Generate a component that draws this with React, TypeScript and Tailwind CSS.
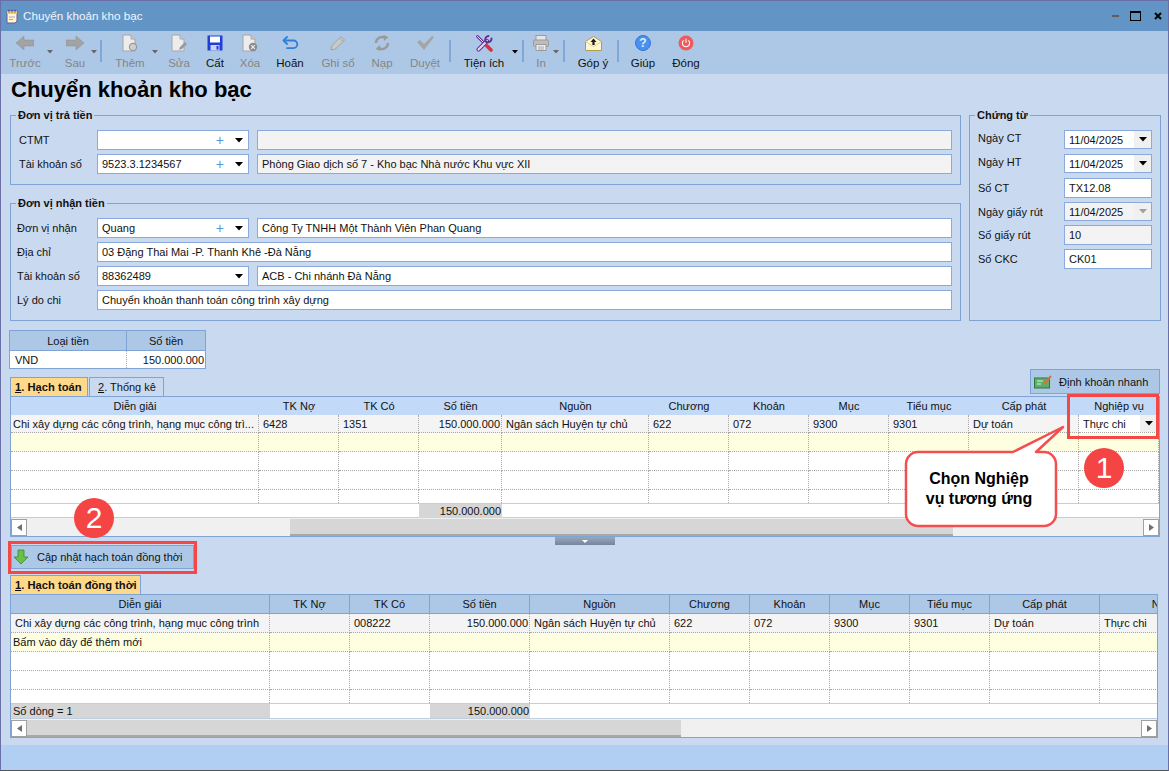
import type { ReactNode } from 'react';

const upperCols = 'grid grid-cols-[248px_80px_80px_83px_147px_80px_80px_80px_80px_110px_80px]';
const lowerCols = 'grid grid-cols-[259px_80px_80px_100px_140px_80px_80px_80px_80px_110px_154px]';

const upperHead = ['Diễn giải', 'TK Nợ', 'TK Có', 'Số tiền', 'Nguồn', 'Chương', 'Khoản', 'Mục', 'Tiểu mục', 'Cấp phát', 'Nghiệp vụ'];

function Caret({ color = '#000' }: { color?: string }) {
  return (
    <svg width="8" height="5" viewBox="0 0 8 5" className="shrink-0">
      <polygon points="0,0 8,0 4,4.5" fill={color} />
    </svg>
  );
}

function IconBack({ flip }: { flip?: boolean }) {
  return (
    <svg width="18" height="16" viewBox="0 0 18 16" className={flip ? '-scale-x-100' : ''}>
      <polygon points="0,8 8,1 8,5 18,5 18,11 8,11 8,15" fill="#a3a3a3" stroke="#8f8f8f" strokeWidth="0.5" />
    </svg>
  );
}

function IconDoc({ badge }: { badge: 'add' | 'edit' | 'del' }) {
  return (
    <svg width="16" height="18" viewBox="0 0 16 18">
      <path d="M1 1h8l4 4v12H1z" fill="#ececec" stroke="#a6a6a6" />
      <path d="M9 1v4h4" fill="#d0d0d0" stroke="#a6a6a6" />
      {badge === 'add' && <circle cx="11" cy="13" r="3.6" fill="#cfcfcf" stroke="#9a9a9a" strokeWidth="1.2" />}
      {badge === 'edit' && <path d="M8 16l1-3 5-5 2 2-5 5z" fill="#9a9a9a" />}
      {badge === 'del' && (
        <>
          <circle cx="11" cy="13" r="4.2" fill="#8c8c8c" />
          <path d="M9.2 11.2l3.6 3.6M12.8 11.2l-3.6 3.6" stroke="#eee" strokeWidth="1.1" />
        </>
      )}
    </svg>
  );
}

function IconSave() {
  return (
    <svg width="16" height="16" viewBox="0 0 16 16">
      <path d="M0.5 0.5h15v15h-15z" fill="#1f3fd8" />
      <rect x="3" y="1.5" width="10" height="6" fill="#fff" />
      <rect x="3.5" y="10" width="9" height="5.5" fill="#c9d3ee" />
      <rect x="9.5" y="11" width="2" height="3.5" fill="#1f3fd8" />
    </svg>
  );
}

function IconUndo() {
  return (
    <svg width="17" height="14" viewBox="0 0 17 14" fill="none" stroke="#2f7fd8" strokeWidth="1.8" strokeLinecap="round" strokeLinejoin="round">
      <path d="M5 1L1.5 4.5 5 8" />
      <path d="M2 4.5h9.5a3.8 3.8 0 0 1 0 7.6H5" />
    </svg>
  );
}

function IconPencil() {
  return (
    <svg width="16" height="16" viewBox="0 0 16 16">
      <path d="M1 15l1-4.5L11 1.5l3.5 3.5-9 9z" fill="#c9c9c9" stroke="#a2a2a2" />
      <path d="M9.5 3l3.5 3.5" stroke="#a2a2a2" />
    </svg>
  );
}

function IconReload() {
  return (
    <svg width="16" height="16" viewBox="0 0 16 16" fill="none" stroke="#9a9a9a" strokeWidth="2.4">
      <path d="M2 8a6 6 0 0 1 9-5.2" />
      <path d="M14 8a6 6 0 0 1-9 5.2" />
      <polygon points="9.5,0 14.5,2 10,6" fill="#9a9a9a" stroke="none" />
      <polygon points="6.5,16 1.5,14 6,10" fill="#9a9a9a" stroke="none" />
    </svg>
  );
}

function IconCheck() {
  return (
    <svg width="17" height="14" viewBox="0 0 17 14">
      <polygon points="0,6 3,4 7,8 15,0 17,1 7,14" fill="#a5a5a5" />
    </svg>
  );
}

function IconTools() {
  return (
    <svg width="17" height="17" viewBox="0 0 17 17" fill="none" strokeLinecap="round">
      <path d="M1.5 1.5l8 8" stroke="#5f2f94" strokeWidth="2.6" />
      <path d="M1.5 1.5l8 8" stroke="#f0e8f8" strokeWidth="1" />
      <path d="M2.5 14.5L11 6" stroke="#5f2f94" strokeWidth="4" />
      <path d="M2.5 14.5L11 6" stroke="#e6d8f4" strokeWidth="2.2" />
      <path d="M15.5 3.4a3.6 3.6 0 0 1-5.4 3.4M12.4 1a3.6 3.6 0 0 0-3 4.4" stroke="#5f2f94" strokeWidth="2" />
      <path d="M11 11l4 4" stroke="#d6333a" strokeWidth="3.6" />
    </svg>
  );
}

function IconPrint() {
  return (
    <svg width="16" height="16" viewBox="0 0 16 16">
      <rect x="3" y="0.5" width="10" height="5" fill="#e6e6e6" stroke="#9b9b9b" />
      <rect x="0.5" y="5" width="15" height="6.5" rx="1" fill="#bdbdbd" stroke="#9b9b9b" />
      <rect x="3" y="9.5" width="10" height="6" fill="#ededed" stroke="#9b9b9b" />
      <path d="M5 12h6M5 14h6" stroke="#a8a8a8" />
    </svg>
  );
}

function IconMail() {
  return (
    <svg width="17" height="15" viewBox="0 0 17 15">
      <path d="M0.5 5.5L8.5 0.5l8 5v9h-16z" fill="#fff6d2" stroke="#b79a45" />
      <path d="M0.5 5.5l8 5 8-5" fill="none" stroke="#e2cf8d" />
      <polygon points="8.5,2.5 11.5,6 9.6,6 9.6,9 7.4,9 7.4,6 5.5,6" fill="#1c1c1c" />
    </svg>
  );
}

function IconHelp() {
  return (
    <div className="flex h-4 w-4 items-center justify-center rounded-full border border-[#2f78d8] bg-[#4a90ee] text-[12px] font-bold leading-none text-[#dfeeff]">
      ?
    </div>
  );
}

function IconPower() {
  return (
    <svg width="16" height="16" viewBox="0 0 16 16">
      <circle cx="8" cy="8" r="7.5" fill="#ee5a5e" />
      <path d="M5.6 5.4a3.6 3.6 0 1 0 4.8 0" fill="none" stroke="#fff" strokeWidth="1.1" />
      <path d="M8 3.8v4" stroke="#fff" strokeWidth="1.1" />
    </svg>
  );
}

function ToolItem({ label, icon, off, className }: { label: string; icon: ReactNode; off?: boolean; className: string }) {
  return (
    <div className={`flex shrink-0 flex-col items-center whitespace-nowrap ${className}`}>
      <div className="flex h-[18px] items-center">{icon}</div>
      <div className={`mt-[4px] text-[11.5px] leading-[14px] ${off ? 'text-[#858585]' : 'text-[#111]'}`}>{label}</div>
    </div>
  );
}

function ToolCaret({ className, off }: { className: string; off?: boolean }) {
  return (
    <div className={`mt-[15px] flex h-[6px] w-[6px] shrink-0 items-center justify-center ${className}`}>
      <svg width="6" height="4" viewBox="0 0 6 4">
        <polygon points="0,0 6,0 3,3.5" fill={off ? '#666' : '#000'} />
      </svg>
    </div>
  );
}

function ToolSep({ className }: { className: string }) {
  return <div className={`mt-[6px] h-[22px] w-[2px] shrink-0 bg-[#7fa8d8] ${className}`} />;
}

function Toolbar() {
  return (
    <div className="flex h-[43px] items-start bg-[#adc8e6] pt-[3px]">
      <ToolItem className="ml-[9px] w-[30px]" label="Trước" off icon={<IconBack />} />
      <ToolCaret className="ml-[7px]" off />
      <ToolItem className="ml-[7px] w-[30px]" label="Sau" off icon={<IconBack flip />} />
      <ToolCaret className="ml-[1px]" off />
      <ToolSep className="ml-[3px]" />
      <ToolItem className="ml-[13px] w-[30px]" label="Thêm" off icon={<IconDoc badge="add" />} />
      <ToolCaret className="ml-[7px]" off />
      <ToolItem className="ml-[11px] w-[20px]" label="Sửa" off icon={<IconDoc badge="edit" />} />
      <ToolItem className="ml-[16px] w-[20px]" label="Cất" icon={<IconSave />} />
      <ToolItem className="ml-[15px] w-[20px]" label="Xóa" off icon={<IconDoc badge="del" />} />
      <ToolItem className="ml-[15px] w-[30px]" label="Hoãn" icon={<IconUndo />} />
      <ToolItem className="ml-[15px] w-[36px]" label="Ghi sổ" off icon={<IconPencil />} />
      <ToolItem className="ml-[14px] w-[24px]" label="Nạp" off icon={<IconReload />} />
      <ToolItem className="ml-[14px] w-[34px]" label="Duyệt" off icon={<IconCheck />} />
      <ToolSep className="ml-[7px]" />
      <ToolItem className="ml-[12px] w-[42px]" label="Tiện ích" icon={<IconTools />} />
      <ToolCaret className="ml-[7px]" />
      <ToolSep className="ml-[4px]" />
      <ToolItem className="ml-[7px] w-[20px]" label="In" off icon={<IconPrint />} />
      <ToolCaret className="ml-[2px]" off />
      <ToolSep className="ml-[4px]" />
      <ToolItem className="ml-[11px] w-[34px]" label="Góp ý" icon={<IconMail />} />
      <ToolSep className="ml-[7px]" />
      <ToolItem className="ml-[10px] w-[28px]" label="Giúp" icon={<IconHelp />} />
      <ToolItem className="ml-[13px] w-[32px]" label="Đóng" icon={<IconPower />} />
    </div>
  );
}

function TitleBar() {
  return (
    <div className="flex h-[30px] items-center bg-[#6295c6] pl-[4px] text-white">
      <svg width="14" height="15" viewBox="0 0 14 15">
        <path d="M2 2h10v10l-2 2H2z" fill="#fdf6cf" stroke="#6a55a8" />
        <rect x="2" y="2" width="10" height="3" fill="#f1cf55" />
        <path d="M4 0.5v3M7 0.5v3M10 0.5v3" stroke="#5a4a9c" />
        <path d="M4 8h6M4 10.5h4" stroke="#a9a0d2" />
      </svg>
      <span className="ml-[4px] text-[11.7px] text-[#eef5fc]">Chuyển khoản kho bạc</span>
      <div className="ml-auto flex items-center pr-[6px]">
        <div className="h-[2px] w-[7px] bg-[#5c5c5c]" />
        <div className="ml-[11px] h-[10px] w-[11px] border border-t-[2px] border-black" />
        <svg width="8" height="8" viewBox="0 0 8 8" className="ml-[13px]">
          <path d="M1 1l6 6M7 1L1 7" stroke="#000" strokeWidth="2" />
        </svg>
      </div>
    </div>
  );
}

function Box({ children, className = '', muted }: { children?: ReactNode; className?: string; muted?: boolean }) {
  return (
    <div className={`flex h-5 items-center border border-[#8aaade] px-[4px] whitespace-nowrap ${muted ? 'bg-[#f3f3f3]' : 'bg-white'} ${className}`}>
      {children}
    </div>
  );
}

function Combo({ value, plus = true }: { value: string; plus?: boolean }) {
  return (
    <Box className="w-[152px] shrink-0">
      <span>{value}</span>
      {plus && <span className="ml-auto text-[14px] leading-none text-[#4d9fe0]">+</span>}
      <span className={plus ? 'ml-[11px] mr-[1px]' : 'ml-auto mr-[1px]'}>
        <Caret />
      </span>
    </Box>
  );
}

function Group({ title, children, className = '' }: { title: string; children: ReactNode; className?: string }) {
  return (
    <fieldset className={`border border-[#7fa4d4] ${className}`}>
      <legend className="ml-[5px] px-[2px] leading-[14px] font-bold">{title}</legend>
      {children}
    </fieldset>
  );
}

function FormRow({ label, labelClass = 'pl-[8px]', children }: { label: string; labelClass?: string; children: ReactNode }) {
  return (
    <div className="flex items-center">
      <div className={`w-[86px] shrink-0 ${labelClass}`}>{label}</div>
      {children}
    </div>
  );
}

function DocRow({ label, children, labelClass = '', className = 'mt-[4px]' }: { label: string; children: ReactNode; labelClass?: string; className?: string }) {
  return (
    <div className={`flex items-center pl-[8px] ${className}`}>
      <div className={`w-[86px] shrink-0 ${labelClass}`}>{label}</div>
      {children}
    </div>
  );
}

function DateBox({ value, off }: { value: string; off?: boolean }) {
  return (
    <div className={`flex h-[19px] w-[88px] items-center border border-[#8aaade] pl-[4px] ${off ? 'bg-[#f3f3f3]' : 'bg-white'}`}>
      <span>{value}</span>
      <span className="ml-auto flex h-full w-[17px] items-center justify-center bg-[#f0f0f0]">
        <Caret color={off ? '#a0a0a0' : '#000'} />
      </span>
    </div>
  );
}

function Forms() {
  return (
    <div className="flex gap-[8px] pl-[9px]">
      <div className="w-[951px]">
        <Group title="Đơn vị trả tiền" className="h-[77px]">
          <div className="flex flex-col gap-[4px] pt-[8px]">
            <FormRow label="CTMT">
              <Combo value="" />
              <Box muted className="ml-[8px] w-[695px]" />
            </FormRow>
            <FormRow label="Tài khoản số">
              <Combo value="9523.3.1234567" />
              <Box muted className="ml-[8px] w-[695px]">Phòng Giao dịch số 7 - Kho bạc Nhà nước Khu vực XII</Box>
            </FormRow>
          </div>
        </Group>
        <Group title="Đơn vị nhận tiền" className="mt-[11px] h-[125px]">
          <div className="flex flex-col gap-[4px] pt-[8px]">
            <FormRow label="Đơn vị nhận" labelClass="pl-[6px]">
              <Combo value="Quang" />
              <Box className="ml-[8px] w-[695px]">Công Ty TNHH Một Thành Viên Phan Quang</Box>
            </FormRow>
            <FormRow label="Địa chỉ" labelClass="pl-[6px]">
              <Box className="w-[855px]">03 Đặng Thai Mai -P. Thanh Khê -Đà Nẵng</Box>
            </FormRow>
            <FormRow label="Tài khoản số" labelClass="pl-[6px]">
              <Combo value="88362489" plus={false} />
              <Box className="ml-[8px] w-[695px]">ACB - Chi nhánh Đà Nẵng</Box>
            </FormRow>
            <FormRow label="Lý do chi" labelClass="pl-[6px]">
              <Box className="w-[855px]">Chuyển khoản thanh toán công trình xây dựng</Box>
            </FormRow>
          </div>
        </Group>
      </div>
      <Group title="Chứng từ" className="h-[213px] w-[192px]">
        <div className="pt-[8px]">
          <DocRow label="Ngày CT" className="" labelClass="pb-[3px]"><DateBox value="11/04/2025" /></DocRow>
          <DocRow label="Ngày HT" className="mt-[5px]" labelClass="pb-[3px]"><DateBox value="11/04/2025" /></DocRow>
          <DocRow label="Số CT" className="mt-[5px]"><Box className="w-[88px]">TX12.08</Box></DocRow>
          <DocRow label="Ngày giấy rút"><DateBox value="11/04/2025" off /></DocRow>
          <DocRow label="Số giấy rút"><Box muted className="w-[88px]">10</Box></DocRow>
          <DocRow label="Số CKC"><Box className="w-[88px]">CK01</Box></DocRow>
        </div>
      </Group>
    </div>
  );
}

function CurrencyTable() {
  return (
    <div className="ml-[8px] mt-[9px] w-[197px] border border-[#7fa4d4]">
      <div className="grid h-[20px] grid-cols-[117px_78px] border-b border-[#7fa4d4] bg-[#adc8e6]">
        <div className="flex items-center justify-center border-r border-[#7fa4d4]">Loại tiền</div>
        <div className="flex items-center justify-center">Số tiền</div>
      </div>
      <div className="grid h-[17px] grid-cols-[117px_78px] bg-white">
        <div className="flex items-center border-r border-dotted border-[#a8a8a8] pl-[5px]">VND</div>
        <div className="flex items-center justify-end pr-[1px]">150.000.000</div>
      </div>
    </div>
  );
}

function Tab({ n, label, active, className = '' }: { n: string; label: string; active?: boolean; className?: string }) {
  return (
    <div className={`flex h-[19px] items-center whitespace-pre border-x border-t border-[#7fa4d4] ${active ? 'bg-[#ffd98a] text-[11.2px] font-bold' : ''} ${className}`}>
      <span className="underline">{n}</span>
      <span>. {label}</span>
    </div>
  );
}

function Cell({ children, right, gray, className = '' }: { children?: ReactNode; right?: boolean; gray?: boolean; className?: string }) {
  return (
    <div className={`flex items-center overflow-hidden whitespace-nowrap border-r border-b border-dotted border-[#a8a8a8] ${right ? 'justify-end pr-[1px]' : 'pl-[4px]'} ${gray ? 'bg-[#d6d6d6]' : ''} ${className}`}>
      {children}
    </div>
  );
}

function BlankRows({ cols, bg, h, n }: { cols: string; bg: string; h: string; n: number }) {
  return (
    <div className={`${cols} ${bg} ${h}`}>
      {Array.from({ length: n }, (_, i) => (
        <Cell key={i} />
      ))}
    </div>
  );
}

function ScrollArrow({ right }: { right?: boolean }) {
  return (
    <div className="flex h-[17px] w-[16px] shrink-0 items-center justify-center border border-[#a0a0a0] bg-white">
      <svg width="5" height="7" viewBox="0 0 5 7">
        <polygon points={right ? '0,0 5,3.5 0,7' : '5,0 0,3.5 5,7'} fill="#707070" />
      </svg>
    </div>
  );
}

function UpperGrid() {
  return (
    <div className="ml-[9px] h-[141px] w-[1150px] overflow-hidden border border-[#7fa4d4] bg-white">
      <div className={`${upperCols} h-[18px] bg-[#c2d9f7]`}>
        {upperHead.map((h) => (
          <div key={h} className="flex items-center justify-center">{h}</div>
        ))}
      </div>
      <div className={`${upperCols} h-[18px] bg-[#f4f4f4]`}>
        <Cell className="!pl-[2px]">Chi xây dựng các công trình, hạng mục công trì...</Cell>
        <Cell>6428</Cell>
        <Cell>1351</Cell>
        <Cell right>150.000.000</Cell>
        <Cell>Ngân sách Huyện tự chủ</Cell>
        <Cell>622</Cell>
        <Cell>072</Cell>
        <Cell>9300</Cell>
        <Cell>9301</Cell>
        <Cell>Dự toán</Cell>
        <Cell className="bg-white">
          <span>Thực chi</span>
          <span className="ml-auto flex h-full w-[18px] items-center justify-center bg-[#f0f0f0]">
            <Caret />
          </span>
        </Cell>
      </div>
      <BlankRows cols={upperCols} bg="bg-[#feffe0]" h="h-[19px]" n={11} />
      <BlankRows cols={upperCols} bg="bg-white" h="h-[19px]" n={11} />
      <BlankRows cols={upperCols} bg="bg-white" h="h-[19px]" n={11} />
      <div className={`${upperCols} h-[13px] bg-white`}>
        {Array.from({ length: 11 }, (_, i) => (
          <div key={i} className="border-r border-dotted border-[#a8a8a8]" />
        ))}
      </div>
      <div className={`${upperCols} h-[15px] border-y border-[#c0cfe0] bg-white`}>
        <div className="col-start-4 flex items-center justify-end bg-[#d6d6d6] pr-[1px]">150.000.000</div>
      </div>
      <div className="flex h-[18px] bg-[#f0f0f0] pt-px">
        <ScrollArrow />
        <div className="w-[263px] shrink-0" />
        <div className="h-[17px] w-[663px] shrink-0 border-b-2 border-[#a8a8a8] bg-[#d6d6d6]" />
        <div className="flex-1" />
        <ScrollArrow right />
      </div>
    </div>
  );
}

function LowerGrid() {
  return (
    <div className="ml-[9px] h-[144px] w-[1148px] overflow-hidden border border-[#7fa4d4] bg-white">
      <div className={`${lowerCols} h-[19px] border-b border-[#7fa4d4] bg-[#adc8e6]`}>
        {upperHead.map((h) => (
          <div key={h} className="flex items-center justify-center border-r border-[#7fa4d4]">{h}</div>
        ))}
      </div>
      <div className={`${lowerCols} h-[19px] bg-[#f4f4f4]`}>
        <Cell>Chi xây dựng các công trình, hạng mục công trình</Cell>
        <Cell />
        <Cell>008222</Cell>
        <Cell right>150.000.000</Cell>
        <Cell>Ngân sách Huyện tự chủ</Cell>
        <Cell>622</Cell>
        <Cell>072</Cell>
        <Cell>9300</Cell>
        <Cell>9301</Cell>
        <Cell>Dự toán</Cell>
        <Cell>Thực chi</Cell>
      </div>
      <div className={`${lowerCols} h-[19px] bg-[#feffe0]`}>
        <Cell className="!pl-[2px]">Bấm vào đây để thêm mới</Cell>
        {Array.from({ length: 10 }, (_, i) => (
          <Cell key={i} />
        ))}
      </div>
      <BlankRows cols={lowerCols} bg="bg-white" h="h-[19px]" n={11} />
      <BlankRows cols={lowerCols} bg="bg-white" h="h-[19px]" n={11} />
      <div className={`${lowerCols} h-[13px] bg-white`}>
        {Array.from({ length: 11 }, (_, i) => (
          <div key={i} className="border-r border-dotted border-[#a8a8a8]" />
        ))}
      </div>
      <div className={`${lowerCols} h-[16px] border-y border-[#c0cfe0] bg-white`}>
        <div className="flex items-center bg-[#d6d6d6] pl-[2px]">Số dòng = 1</div>
        <div className="col-start-4 flex items-center justify-end bg-[#d6d6d6] pr-[1px]">150.000.000</div>
      </div>
      <div className="flex h-[18px] bg-[#f0f0f0] pt-px">
        <ScrollArrow />
        <div className="h-[17px] w-[654px] shrink-0 border-b-2 border-[#a8a8a8] bg-[#d6d6d6]" />
        <div className="flex-1" />
        <ScrollArrow right />
      </div>
    </div>
  );
}

function Annotations() {
  return (
    <>
      <div className="absolute left-[1066px] top-[393px] h-[45px] w-[92px] border-[3px] border-[#f44848]" />
      <div className="absolute left-[7px] top-[540px] h-[33px] w-[189px] border-[3px] border-[#f44848]" />
      <div className="absolute left-[1083px] top-[447px] flex h-10 w-10 items-center justify-center rounded-full bg-[#f44444] text-[30px] leading-none text-white">1</div>
      <div className="absolute left-[73px] top-[497px] flex h-10 w-10 items-center justify-center rounded-full bg-[#f44444] text-[30px] leading-none text-white">2</div>
      <svg width="170" height="112" viewBox="0 0 170 112" className="absolute left-[900px] top-[419px]">
        <path
          d="M17 32H112L162 7L135 32H143a12 12 0 0 1 12 12V94a12 12 0 0 1-12 12H17a12 12 0 0 1-12-12V44a12 12 0 0 1 12-12z"
          fill="#fff"
          stroke="#f25050"
          strokeWidth="2.5"
          strokeLinejoin="round"
        />
      </svg>
      <div className="absolute left-[903px] top-[468px] w-[150px] text-center text-[16px] leading-[20px] font-bold text-black">
        Chọn Nghiệp
        <br />
        vụ tương ứng
      </div>
    </>
  );
}

export default function App() {
  return (
    <div className="relative h-[771px] w-[1169px] overflow-hidden border border-x-[#6a6fa8] border-t-[#6a6fa8] border-b-[#555] bg-[#c9daf0] font-['Liberation_Sans',Arial,sans-serif] text-[11px] leading-[14px] text-[#111]">
      <TitleBar />
      <Toolbar />
      <h1 className="flex h-[34px] items-center pb-[2px] pl-[10px] text-[22px] font-bold text-black">Chuyển khoản kho bạc</h1>
      <Forms />
      <CurrencyTable />

      <div className="flex h-[27px] w-[1159px] justify-between pl-[9px]">
        <div className="flex gap-px self-end">
          <Tab n="1" label="Hạch toán" active className="w-[78px] pl-[4px]" />
          <Tab n="2" label="Thống kê" className="w-[75px] pl-[8px]" />
        </div>
        <button className="flex h-[25px] w-[130px] items-center border border-[#7fa4d4] bg-[#adc8e6] pl-[3px]">
          <svg width="18" height="14" viewBox="0 0 18 14">
            <rect x="0.5" y="3" width="15" height="10" fill="#5fae6c" stroke="#2c7a3d" />
            <path d="M3 6h6M3 9h4" stroke="#d8f0dc" />
            <path d="M10 9l7-8" stroke="#d8703a" strokeWidth="2" />
          </svg>
          <span className="ml-[7px] whitespace-nowrap">Định khoản nhanh</span>
        </button>
      </div>

      <UpperGrid />

      <div className="flex h-[8px] justify-center">
        <div className="flex h-[8px] w-[60px] items-center justify-center bg-gradient-to-b from-[#98a8bc] to-[#75859b]">
          <svg width="6" height="3" viewBox="0 0 6 3">
            <polygon points="0,0 6,0 3,3" fill="#fff" />
          </svg>
        </div>
      </div>

      <button className="ml-[10px] flex h-[24px] w-[183px] items-center border border-[#7fa4d4] bg-[#adc8e6] pl-[1px]">
        <svg width="16" height="16" viewBox="0 0 16 16">
          <path d="M5 1h6v7h4l-7 7-7-7h4z" fill="#6cc04a" stroke="#2f8a2a" strokeWidth="0.8" />
        </svg>
        <span className="ml-[8px] whitespace-nowrap">Cập nhật hạch toán đồng thời</span>
      </button>

      <div className="ml-[9px] mt-[6px] flex">
        <Tab n="1" label="Hạch toán đồng thời" active className="w-[131px] pl-[4px]" />
      </div>

      <LowerGrid />

      <div className="absolute inset-x-0 bottom-0 h-[25px] bg-[#b1cef3]" />
      <Annotations />
    </div>
  );
}
